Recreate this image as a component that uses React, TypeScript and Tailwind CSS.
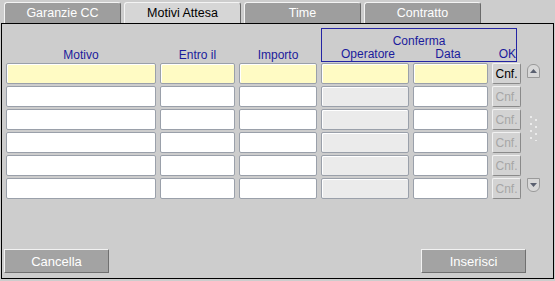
import React from "react";

const tabs = [
  { label: "Garanzie CC", active: false },
  { label: "Motivi Attesa", active: true },
  { label: "Time", active: false },
  { label: "Contratto", active: false },
];

const rows = [0, 1, 2, 3, 4, 5];

const field =
  "h-[21px] rounded-[2px] border border-[#9aa0aa] shadow-[inset_1px_1px_0_#ffffff]";

function Button({ label }: { label: string }) {
  return (
    <button className="flex h-[24px] w-[105px] items-center justify-center border border-t-[#f2f2f2] border-l-[#f2f2f2] border-b-[#707070] border-r-[#707070] bg-[#a3a3a3] text-[13px] text-white">
      {label}
    </button>
  );
}

function ScrollArrow({ up }: { up: boolean }) {
  return (
    <div
      className={`flex h-[14px] w-[13px] items-center justify-center border border-[#9a9a9a] bg-[#d8d8d8] ${
        up ? "rounded-t-[6px]" : "rounded-b-[6px]"
      }`}
    >
      <svg width="7" height="4" viewBox="0 0 7 4">
        {up ? (
          <polygon points="0,4 7,4 3.5,0" fill="#5a6070" />
        ) : (
          <polygon points="0,0 7,0 3.5,4" fill="#5a6070" />
        )}
      </svg>
    </div>
  );
}

export default function App() {
  return (
    <div
      className="h-[281px] w-[555px] overflow-hidden bg-[#cdcdcd] text-[12px] leading-none"
      style={{ fontFamily: '"Liberation Sans", Arial, sans-serif' }}
    >
      {/* Tabs */}
      <div className="flex gap-[3px] pl-[4px] pt-[2px]">
        {tabs.map((t) => (
          <div
            key={t.label}
            className={`flex h-[21px] w-[117px] items-center justify-center rounded-t-[3px] border border-b-0 border-t-[#f4f4f4] border-l-[#f4f4f4] border-r-[#6a6a6a] text-[12.5px] ${
              t.active ? "bg-[#d6d6d6] text-black" : "bg-[#9e9e9e] text-white"
            }`}
          >
            {t.label}
          </div>
        ))}
      </div>

      {/* Panel */}
      <div className="ml-[1px] flex h-[256px] w-[553px] flex-col border border-black">
        {/* Header */}
        <div className="flex pl-[4px] pt-[4px]">
          <div className="grid grid-cols-[150px_75px_78px_196px] gap-x-[4px] text-[#1b1b9c]">
            <div className="flex h-[34px] items-end justify-center pb-[1px]">Motivo</div>
            <div className="flex h-[34px] items-end justify-center pb-[1px]">Entro il</div>
            <div className="flex h-[34px] items-end justify-center pb-[1px]">Importo</div>
            <div className="flex h-[34px] flex-col border border-[#2424a4]">
              <div className="pt-[6px] text-center">Conferma</div>
              <div className="mt-[1px] grid grid-cols-[92px_68px_34px]">
                <div className="text-center">Operatore</div>
                <div className="text-center">Data</div>
                <div className="text-right">OK</div>
              </div>
            </div>
          </div>
        </div>

        {/* Rows */}
        <div className="mt-[1px] flex pl-[4px]">
          <div className="flex flex-col gap-[2px]">
            {rows.map((r) => {
              const first = r === 0;
              const bg = first ? "bg-[#fffbc4]" : "bg-white";
              return (
                <div
                  key={r}
                  className="grid grid-cols-[150px_75px_78px_88px_75px_29px] gap-x-[4px]"
                >
                  <div className={`${field} ${bg}`} />
                  <div className={`${field} ${bg}`} />
                  <div className={`${field} ${bg}`} />
                  <div className={`${field} ${first ? "bg-[#fffbc4]" : "bg-[#ebebeb]"}`} />
                  <div className={`${field} ${bg}`} />
                  <button
                    className={`flex h-[21px] items-center justify-center rounded-[2px] border border-t-[#f2f2f2] border-l-[#f2f2f2] border-b-[#8a8a8a] border-r-[#8a8a8a] bg-[#d3d3d3] text-[12px] ${
                      first ? "text-black" : "text-[#a6a6a6]"
                    }`}
                  >
                    Cnf.
                  </button>
                </div>
              );
            })}
          </div>

          {/* Scroller */}
          <div className="ml-[6px] flex h-[132px] w-[13px] flex-col items-center justify-between pt-[1px] pb-[3px]">
            <ScrollArrow up />
            <svg width="9" height="26" viewBox="0 0 9 26">
              {[2, 9, 16, 23].map((y) => (
                <g key={y}>
                  <circle cx="2" cy={y} r="1" fill="#f4f4f4" />
                  <circle cx="7" cy={y + 3} r="1" fill="#f4f4f4" />
                </g>
              ))}
            </svg>
            <ScrollArrow up={false} />
          </div>
        </div>

        {/* Buttons */}
        <div className="mt-auto flex justify-between pb-[5px] pl-[2px] pr-[27px]">
          <Button label="Cancella" />
          <Button label="Inserisci" />
        </div>
      </div>
    </div>
  );
}
